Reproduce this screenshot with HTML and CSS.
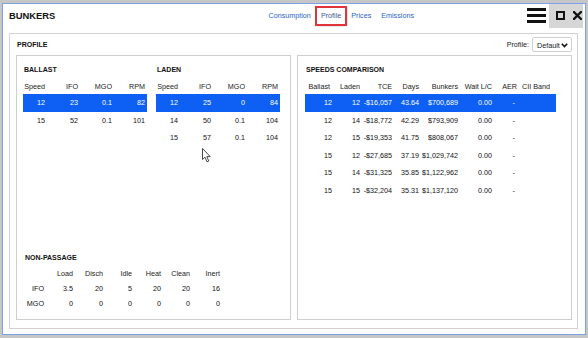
FILE: index.html
```html
<!DOCTYPE html>
<html>
<head>
<meta charset="utf-8">
<link rel="stylesheet" href="styles.css">
</head>
<body>
<div class="window">
  <header class="titlebar">
    <h1 class="title">BUNKERS</h1>
    <nav class="nav">
      <a class="link">Consumption</a><a class="link active">Profile</a><a class="link">Prices</a><a class="link">Emissions</a>
    </nav>
    <div class="menu"><span></span><span></span><span></span></div>
    <div class="winctl">
      <span class="max"></span>
      <svg class="close" width="9" height="9" viewBox="0 0 9 9"><path d="M1 1L8 8M8 1L1 8" stroke="#111" stroke-width="2.3" stroke-linecap="square"/></svg>
    </div>
  </header>

  <section class="outer">
    <div class="outer-head">
      <span class="label">PROFILE</span>
      <div class="picker">
        <span class="picker-label">Profile:</span>
        <div class="select">Default
          <svg width="7" height="5" viewBox="0 0 7 5"><path d="M0.8 0.8L3.5 3.6L6.2 0.8" fill="none" stroke="#111" stroke-width="1.6"/></svg>
        </div>
      </div>
    </div>

    <div class="panels">
      <div class="panel left">
        <div class="pair">
          <div class="block">
            <h2 class="sec">BALLAST</h2>
            <table class="grid four">
              <colgroup><col class="c24"><col class="c33"><col class="c34"><col class="c33"></colgroup>
              <thead><tr><th>Speed</th><th>IFO</th><th>MGO</th><th>RPM</th></tr></thead>
              <tbody>
                <tr class="sel"><td>12</td><td>23</td><td>0.1</td><td>82</td></tr>
                <tr><td>15</td><td>52</td><td>0.1</td><td>101</td></tr>
              </tbody>
            </table>
          </div>
          <div class="block">
            <h2 class="sec">LADEN</h2>
            <table class="grid four">
              <colgroup><col class="c24"><col class="c33"><col class="c34"><col class="c33"></colgroup>
              <thead><tr><th>Speed</th><th>IFO</th><th>MGO</th><th>RPM</th></tr></thead>
              <tbody>
                <tr class="sel"><td>12</td><td>25</td><td>0</td><td>84</td></tr>
                <tr><td>14</td><td>50</td><td>0.1</td><td>104</td></tr>
                <tr><td>15</td><td>57</td><td>0.1</td><td>104</td></tr>
              </tbody>
            </table>
          </div>
        </div>

        <div class="np">
          <h2 class="sec np-title">NON-PASSAGE</h2>
          <table class="grid small">
            <colgroup><col class="n23"><col class="n29"><col class="n30"><col class="n29"><col class="n29"><col class="n29"><col class="n30"></colgroup>
            <thead><tr><th></th><th>Load</th><th>Disch</th><th>Idle</th><th>Heat</th><th>Clean</th><th>Inert</th></tr></thead>
            <tbody>
              <tr><td class="rl">IFO</td><td>3.5</td><td>20</td><td>5</td><td>20</td><td>20</td><td>16</td></tr>
              <tr><td class="rl">MGO</td><td>0</td><td>0</td><td>0</td><td>0</td><td>0</td><td>0</td></tr>
            </tbody>
          </table>
        </div>

        <svg class="cursor" width="10" height="15" viewBox="0 0 10 15"><path d="M0.5 0.5L0.5 11.5L3 9.2L5 13.8L6.8 13L4.8 8.6L8.2 8.6Z" fill="#fff" stroke="#333" stroke-width="0.9" stroke-linejoin="round"/></svg>
      </div>

      <div class="panel right">
        <h2 class="sec">SPEEDS COMPARISON</h2>
        <table class="grid cmp">
          <colgroup><col class="s30"><col class="s27"><col class="s32"><col class="s27"><col class="s39"><col class="s34"><col class="s25"><col class="s37"></colgroup>
          <thead><tr><th class="b">Ballast</th><th>Laden</th><th>TCE</th><th>Days</th><th>Bunkers</th><th>Wait L/C</th><th>AER</th><th class="last">CII Band</th></tr></thead>
          <tbody>
            <tr class="sel"><td class="b">12</td><td>12</td><td>-$16,057</td><td>43.64</td><td>$700,689</td><td>0.00</td><td class="aer">-</td><td class="last"></td></tr>
            <tr><td class="b">12</td><td>14</td><td>-$18,772</td><td>42.29</td><td>$793,909</td><td>0.00</td><td class="aer">-</td><td class="last"></td></tr>
            <tr><td class="b">12</td><td>15</td><td>-$19,353</td><td>41.75</td><td>$808,067</td><td>0.00</td><td class="aer">-</td><td class="last"></td></tr>
            <tr><td class="b">15</td><td>12</td><td>-$27,685</td><td>37.19</td><td>$1,029,742</td><td>0.00</td><td class="aer">-</td><td class="last"></td></tr>
            <tr><td class="b">15</td><td>14</td><td>-$31,325</td><td>35.85</td><td>$1,122,962</td><td>0.00</td><td class="aer">-</td><td class="last"></td></tr>
            <tr><td class="b">15</td><td>15</td><td>-$32,204</td><td>35.31</td><td>$1,137,120</td><td>0.00</td><td class="aer">-</td><td class="last"></td></tr>
          </tbody>
        </table>
      </div>
    </div>
  </section>
</div>
</body>
</html>
```
FILE: styles.css
```css
* { box-sizing: border-box; margin: 0; padding: 0; }
html, body { width: 588px; height: 338px; overflow: hidden; }
body {
  background: #c6c6c6;
  font-family: "Liberation Sans", Arial, sans-serif;
  color: #111;
  padding: 3px 2px 0 2px;
}
.window {
  width: 584px;
  height: 332px;
  background: #fff;
  border: 1px solid #7ea3e4;
  display: flex;
  flex-direction: column;
}

/* title bar */
.titlebar {
  height: 29px;
  display: flex;
  align-items: flex-start;
  padding-left: 6px;
  padding-right: 2px;
}
.title {
  font-size: 9.4px;
  font-weight: bold;
  color: #111;
  line-height: 12px;
  margin-top: 6px;
}
.nav { margin-left: auto; display: flex; margin-top: 3px; }
.link {
  font-size: 7.2px;
  color: #2a64c8;
  line-height: 18px;
  height: 18px;
  padding: 0 5px;
}
.link.active {
  color: #3a5a9a;
  outline: 2px solid #e2333a;
  outline-offset: -1px;
  box-shadow: 1px 1px 2px rgba(0,0,0,0.3);
}
.menu {
  margin-left: 108px;
  margin-top: 4px;
  width: 19px;
  display: flex;
  flex-direction: column;
  gap: 3px;
}
.menu span { display: block; height: 3px; background: #111; }
.winctl {
  margin-left: 3px;
  width: 34px;
  height: 24px;
  background: #d6d6d6;
  display: flex;
  align-items: center;
  padding-left: 7px;
  gap: 8px;
}
.max { width: 9px; height: 9px; border: 2px solid #111; margin-top: -1px; }
.close { margin-top: -1px; }

/* outer profile panel */
.outer {
  flex: 1;
  margin: 0 7px 5px 6px;
  border: 1px solid #d2d2d2;
  display: flex;
  flex-direction: column;
  padding: 0 5px 8px 6px;
}
.outer-head {
  height: 21px;
  display: flex;
  align-items: center;
  justify-content: space-between;
}
.label { font-size: 7px; font-weight: bold; color: #111; padding-left: 1px; }
.picker { display: flex; align-items: center; gap: 3px; }
.picker-label { font-size: 7.2px; color: #222; }
.select {
  height: 15px;
  width: 40px;
  border: 1px solid #d0d0d0;
  border-radius: 2px;
  font-size: 7.2px;
  color: #222;
  display: flex;
  align-items: center;
  justify-content: space-between;
  padding: 1px 3px 0 4px;
}

.panels { flex: 1; display: flex; gap: 6px; }
.panel {
  width: 275px;
  border: 1px solid #cfcfcf;
  position: relative;
}
.panel.left {
  display: flex;
  flex-direction: column;
  padding: 9px 10px 8px 6px;
}
.panel.right { padding: 9px 8px 8px 7px; }

.sec {
  font-size: 7px;
  font-weight: bold;
  color: #111;
  line-height: 10px;
  padding-left: 1px;
}
.pair { display: flex; gap: 10px; }
.pair .block:first-child { width: 123px; }
.pair .block:last-child { width: 124px; }

.grid {
  width: 100%;
  border-collapse: collapse;
  table-layout: fixed;
  font-size: 7.2px;
  margin-top: 3px;
}
.grid th { font-weight: normal; color: #222; text-align: right; padding-right: 2px; height: 16px; }
.grid td { text-align: right; padding-right: 2px; height: 17.5px; color: #111; white-space: nowrap; }
.grid tr.sel td { background: #0d60f3; color: #fff; }

.c24 { width: 24px; } .c33 { width: 33px; } .c34 { width: 34px; }

.np { margin-top: auto; }
.np-title { padding-left: 2px; }
.grid.small th { height: 15px; }
.grid.small td { height: 15px; }
.grid.small { width: 199px; }
.n23 { width: 23px; } .n29 { width: 29px; } .n30 { width: 30px; }

.cursor { position: absolute; left: 185px; top: 92px; }

.grid.cmp { width: 251px; }
.s30 { width: 30px; } .s27 { width: 27px; } .s32 { width: 32px; } .s39 { width: 39px; }
.s34 { width: 34px; } .s25 { width: 25px; } .s37 { width: 37px; }
.grid.cmp th { height: 16px; }
.grid.cmp .b { padding-right: 3px; }
.grid.cmp th.b { padding-right: 5px; }
.grid.cmp .last { padding-right: 6px; }
.grid.cmp td.aer { padding-right: 4px; }
```
